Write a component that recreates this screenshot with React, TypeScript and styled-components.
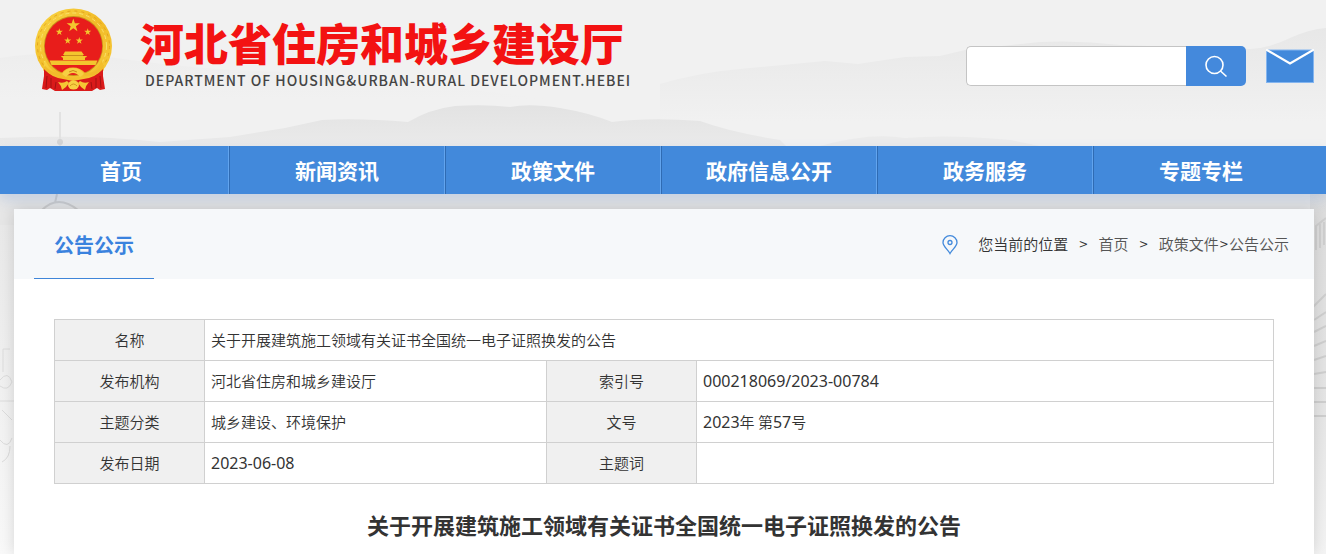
import React from "react";
import styled, { createGlobalStyle } from "styled-components";

const cjk = `"Noto Sans CJK SC", sans-serif`;

const GlobalStyle = createGlobalStyle`
  * { box-sizing: border-box; }
  body {
    margin: 0;
    background: #f1f1f1;
    color: #333;
    font-family: ${cjk};
    font-size: 15px;
    font-weight: 400;
  }
  a { color: inherit; text-decoration: none; }
`;

const Page = styled.div`
  position: relative;
  min-height: 100vh;
  overflow: hidden;
`;

const Scenery = styled.svg`
  position: absolute;
  top: 0;
  left: 0;
  width: 100%;
  height: 554px;
`;

const Content = styled.div`
  position: relative;
`;

const Header = styled.header`
  display: flex;
  justify-content: space-between;
  max-width: 1326px;
  height: 146px;
  margin: 0 auto;
  padding: 8px 12px 0 34px;
`;

const Brand = styled.a`
  display: flex;
  gap: 26px;
`;

const BrandText = styled.div`
  display: flex;
  flex-direction: column;
  padding-top: 4px;
`;

const SiteName = styled.span`
  font-size: 44px;
  line-height: 60px;
  font-weight: 900;
  color: #f31212;
  white-space: nowrap;
`;

const SiteNameEn = styled.span`
  padding-left: 5px;
  font-size: 14px;
  line-height: 16px;
  font-weight: 500;
  letter-spacing: 1px;
  color: #444;
  white-space: nowrap;
`;

const Tools = styled.div`
  display: flex;
  align-items: center;
  align-self: flex-start;
  gap: 20px;
  padding-top: 38px;
`;

const Search = styled.form`
  display: flex;
  height: 40px;
`;

const SearchInput = styled.input`
  width: 220px;
  padding: 0 12px;
  border: 1px solid #c4c4c4;
  border-right: 0;
  border-radius: 5px 0 0 5px;
  background: #fff;
  font: inherit;
  outline: none;
`;

const SearchButton = styled.button`
  display: flex;
  align-items: center;
  justify-content: center;
  width: 60px;
  padding: 0;
  border: 0;
  border-radius: 0 5px 5px 0;
  background: #4489dc;
`;

const MailLink = styled.a`
  display: flex;
`;

const Nav = styled.nav`
  padding: 0 13px;
  background: #4289db;
  box-shadow: 0 6px 12px rgba(80, 130, 210, 0.22);
`;

const NavList = styled.ul`
  display: flex;
  max-width: 1300px;
  margin: 0 auto;
  padding: 0;
  list-style: none;
`;

const NavItem = styled.li`
  flex: 0 1 216px;
  border-left: 1px solid #2f6bb3;
  border-right: 1px solid #62a4ee;
  text-align: center;

  &:first-child { border-left-color: transparent; }
  &:last-child { border-right-color: transparent; }
`;

const NavLink = styled.a`
  display: block;
  font-size: 21px;
  line-height: 48px;
  font-weight: 700;
  color: #fff;
`;

const Body = styled.div`
  padding: 15px 12px 0 14px;
`;

const Card = styled.main`
  max-width: 1300px;
  margin: 0 auto;
  padding-bottom: 12px;
  background: #fff;
  box-shadow: 0 0 14px rgba(0, 0, 0, 0.14);
`;

const CardHead = styled.div`
  display: flex;
  justify-content: space-between;
  height: 70px;
  padding: 0 25px 0 20px;
  background: #f6f8fa;
`;

const SectionTitle = styled.h2`
  margin: 0;
  padding: 2px 20px 0;
  border-bottom: 1px solid #3f85d8;
  font-size: 20px;
  line-height: 68px;
  font-weight: 700;
  color: #3a82de;
`;

const Crumbs = styled.nav`
  display: flex;
  align-items: center;
  font-weight: 350;
  line-height: 20px;
  color: #333;

  a { color: #555; }
  svg { margin: 2px 20px 0 0; }
`;

const Separator = styled.span<{ $tight?: boolean }>`
  padding: ${(p) => (p.$tight ? "0 1px" : "0 11px")};
`;

const Article = styled.article`
  padding: 40px 40px 0;
`;

const InfoTable = styled.table`
  width: 100%;
  border-collapse: collapse;
  table-layout: fixed;
`;

const Column = styled.col<{ $width?: number }>`
  width: ${(p) => (p.$width ? `${p.$width}px` : "auto")};
`;

const cell = `
  height: 41px;
  padding: 0 6px;
  border: 1px solid #d0d0d0;
  font-size: 15px;
  line-height: 20px;
  font-weight: 350;
`;

const Label = styled.th`
  ${cell}
  background: #f0f0f0;
  text-align: center;
`;

const Value = styled.td`
  ${cell}
  text-align: left;
`;

const Figures = styled.span`
  font-family: "Noto Sans", sans-serif;
  font-size: 16px;
  font-weight: 400;
`;

const Headline = styled.h1`
  margin: 22px 0 0;
  font-size: 22px;
  line-height: 36px;
  font-weight: 700;
  text-align: center;
`;

const STAR = "M0,-10 L2.3,-3.1 9.5,-3.1 3.7,1.2 5.9,8.1 0,3.9 -5.9,8.1 -3.7,1.2 -9.5,-3.1 -2.3,-3.1Z";

function Emblem() {
  return (
    <svg width="80" height="84" viewBox="0 0 80 84" aria-hidden="true">
      <defs>
        <linearGradient id="gold" x1="0" y1="0" x2="1" y2="1">
          <stop offset="0" stopColor="#f9d645" />
          <stop offset="0.5" stopColor="#f2bb28" />
          <stop offset="1" stopColor="#f7cb3a" />
        </linearGradient>
      </defs>
      <ellipse cx="39.500" cy="38" rx="38.500" ry="37.500" fill="url(#gold)" />
      <ellipse cx="39.500" cy="38" rx="36" ry="35" fill="none" stroke="#e3a41f" strokeWidth="1" strokeDasharray="3 4" />
      <ellipse cx="39.500" cy="38" rx="33" ry="33" fill="none" stroke="#fae06c" strokeWidth="1" strokeDasharray="4 3" />
      <ellipse cx="39.500" cy="38" rx="29.500" ry="30" fill="#c98f1b" />
      <ellipse cx="39.500" cy="38" rx="28.700" ry="29" fill="#e81d1b" />
      <path d="M11 52 Q18 68 39 70 Q61 68 68 52 L70 62 Q58 76 39 76 Q20 76 9 62Z" fill="url(#gold)" />
      <path d="M18 57 H61 Q54 64 46 65 L39 61 L33 65 Q25 64 18 57Z" fill="#e81d1b" />
      <g fill="#f3c52e">
        <path d={STAR} transform="translate(39.300 17.500) scale(.7)" />
        <path d={STAR} transform="translate(25.300 24) scale(.37)" />
        <path d={STAR} transform="translate(53.700 24) scale(.37)" />
        <path d={STAR} transform="translate(33.700 32.700) scale(.37)" />
        <path d={STAR} transform="translate(45.300 32.700) scale(.37)" />
        <path d="M31 43.500 H47.500 L50 47 H29Z M29 48 H51 V52 H29Z M27 48 H53 L52 49.500 H28Z" />
        <path d="M15.500 52.500 H63.500 L61.500 57 H17.500Z" />
      </g>
      <path d="M30 47.500 H49" stroke="#c98f1b" strokeWidth="1" />
      <path d="M10 59 Q12 66 24 70 L39 73 L55 70 Q67 66 69 59 L69 68 L71 81 L66 82 L63 80 L58 83 H21 L16 80 L13 82 L8 81 L10 68Z" fill="#da1a1a" />
      <path d="M13 68 L12 80 M17 70 L17 80 M66 68 L67 80 M62 70 L62 80 M22 74 L21 81 M57 74 L58 81" stroke="#a31212" strokeWidth="1" fill="none" />
      <path d="M10 59 Q18 68 29 66 Q32 61 39 61 Q46 61 50 66 Q61 68 69 59" fill="none" stroke="#f1bb2b" strokeWidth="3" />
      <path d="M28 66 Q32 60 39 60 Q46 60 50 66 L46 69 Q43 65 39 65 Q35 65 32 69Z" fill="#f7cf43" />
      <path d="M35 64 Q39 61 43 64" fill="none" stroke="#c98f1b" strokeWidth="1" />
      <path d="M24 74 Q29 76 33 73 L35 75 Q32 80 28 82 Q27 77 24 74Z M55 74 Q50 76 46 73 L44 75 Q47 80 51 82 Q52 77 55 74Z" fill="#f5c634" />
      <ellipse cx="39.500" cy="77" rx="5.500" ry="4.500" fill="#f7cf43" />
      <path d="M36 78 Q39.500 74 43 78" fill="none" stroke="#d2981e" strokeWidth="1" />
    </svg>
  );
}

function Mountains() {
  return (
    <Scenery viewBox="0 0 1326 554" preserveAspectRatio="xMidYMin slice" aria-hidden="true">
      <defs>
        <linearGradient id="ridge" x1="0" y1="0" x2="0" y2="1">
          <stop offset="0" stopColor="#dedede" />
          <stop offset="1" stopColor="#ebebeb" />
        </linearGradient>
        <linearGradient id="far" x1="0" y1="0" x2="0" y2="1">
          <stop offset="0" stopColor="#e5e5e5" />
          <stop offset="1" stopColor="#f1f1f1" />
        </linearGradient>
        <linearGradient id="side" x1="0" y1="0" x2="0" y2="1">
          <stop offset="0" stopColor="#dcdcdc" />
          <stop offset="0.6" stopColor="#e6e6e6" />
          <stop offset="1" stopColor="#f4f4f4" />
        </linearGradient>
        <linearGradient id="mist" x1="0" y1="0" x2="0" y2="1">
          <stop offset="0" stopColor="#e9e9e9" />
          <stop offset="1" stopColor="#f9f9f9" />
        </linearGradient>
      </defs>
      <path d="M0 58 Q60 48 130 60 Q220 72 300 72 L420 84 L560 100 H0Z" fill="url(#far)" opacity=".3" />
      <path d="M660 84 Q700 72 750 68 L825 61 L858 64 L905 57 L940 56 L965 50 Q1000 46 1040 42 Q1080 40 1120 45 L1250 49 Q1270 48 1290 38 Q1310 29 1326 28 V122 H660Z" fill="url(#far)" opacity=".8" />
      <path d="M0 138 Q90 134 160 142 L230 137 L285 128 L322 120 Q360 118 408 122 Q430 109 455 106 Q485 104 510 107 Q530 103 560 108 Q590 113 612 122 Q650 117 700 121 Q730 132 780 140 L800 160 H0Z" fill="url(#ridge)" opacity=".75" />
      <path d="M820 146 Q870 132 905 138 Q950 134 1010 140 L1060 150 H820Z" fill="#ebebeb" />
      <path d="M60 112 V146" stroke="#e2e2e2" strokeWidth="2" />
      <circle cx="60" cy="142" r="3" fill="#d4d4d4" />
      <path d="M0 194 H1326 V225 H0Z" fill="#e6e6e6" />
      <path d="M57 194 L55 203 M42 210 Q58 194 78 210" fill="none" stroke="#cdcdcd" strokeWidth="2" />
      <path d="M0 225 H20 V554 H0Z" fill="url(#mist)" />
      <path d="M3 372 V349 H10 M0 380 Q8 370 12 382 Q8 392 0 386 M0 401 H14 M2 410 L12 420 M0 440 Q8 450 12 438 M2 462 Q10 458 10 446" fill="none" stroke="#dcdcdc" strokeWidth="1" />
      <path d="M1310 194 H1326 V554 H1310Z" fill="url(#side)" />
      <path d="M1316 250 V226 L1326 218 M1320 248 V224 M1324 245 V222 M1310 310 L1326 294 M1314 320 L1326 312 M1314 332 L1326 326 M1314 346 L1326 341 M1314 360 L1326 356 M1314 374 L1326 372 M1314 388 H1326 M1314 402 H1326 M1314 416 H1326" fill="none" stroke="#cfcfcf" strokeWidth="2" />
    </Scenery>
  );
}

const navItems = ["首页", "新闻资讯", "政策文件", "政府信息公开", "政务服务", "专题专栏"];
const subject = "关于开展建筑施工领域有关证书全国统一电子证照换发的公告";

export default function App() {
  return (
    <Page>
      <GlobalStyle />
      <Mountains />
      <Content>
        <Header>
          <Brand href="#">
            <Emblem />
            <BrandText>
              <SiteName>河北省住房和城乡建设厅</SiteName>
              <SiteNameEn>DEPARTMENT OF HOUSING&amp;URBAN-RURAL DEVELOPMENT.HEBEI</SiteNameEn>
            </BrandText>
          </Brand>
          <Tools>
            <Search role="search">
              <SearchInput type="text" aria-label="搜索" />
              <SearchButton type="button" aria-label="搜索">
                <svg width="24" height="24" viewBox="0 0 24 24" fill="none" stroke="#fff" strokeWidth="1.6">
                  <circle cx="10.500" cy="11" r="8.500" />
                  <path d="M16.500 17 L22.500 22.500" />
                </svg>
              </SearchButton>
            </Search>
            <MailLink href="#" aria-label="邮箱">
              <svg width="48" height="34" viewBox="0 0 48 34">
                <rect x="0.500" y="1" width="47" height="32.500" fill="#4289db" stroke="#84b5ef" />
                <path d="M0 0.500 L24 14.500 L48 0.500" fill="none" stroke="#fff" strokeWidth="2.200" />
              </svg>
            </MailLink>
          </Tools>
        </Header>
        <Nav>
          <NavList>
            {navItems.map((item) => (
              <NavItem key={item}>
                <NavLink href="#">{item}</NavLink>
              </NavItem>
            ))}
          </NavList>
        </Nav>
        <Body>
          <Card>
            <CardHead>
              <SectionTitle>公告公示</SectionTitle>
              <Crumbs>
                <svg width="16" height="20" viewBox="0 0 16 20" fill="none" stroke="#4289db" strokeWidth="1.300">
                  <path d="M8 18.500 C6 14.500 1 11.500 1 7.500 A7 6.800 0 0 1 15 7.500 C15 11.500 10 14.500 8 18.500Z" />
                  <circle cx="8" cy="7.500" r="2" />
                </svg>
                <span>您当前的位置</span>
                <Separator>&gt;</Separator>
                <a href="#">首页</a>
                <Separator>&gt;</Separator>
                <a href="#">政策文件</a>
                <Separator $tight>&gt;</Separator>
                <a href="#">公告公示</a>
              </Crumbs>
            </CardHead>
            <Article>
              <InfoTable>
                <colgroup>
                  <Column $width={150} />
                  <Column $width={342} />
                  <Column $width={150} />
                  <Column />
                </colgroup>
                <tbody>
                  <tr>
                    <Label scope="row">名称</Label>
                    <Value colSpan={3}>{subject}</Value>
                  </tr>
                  <tr>
                    <Label scope="row">发布机构</Label>
                    <Value>河北省住房和城乡建设厅</Value>
                    <Label scope="row">索引号</Label>
                    <Value><Figures>000218069/2023-00784</Figures></Value>
                  </tr>
                  <tr>
                    <Label scope="row">主题分类</Label>
                    <Value>城乡建设、环境保护</Value>
                    <Label scope="row">文号</Label>
                    <Value>
                      <Figures>2023</Figures>年 第<Figures>57</Figures>号
                    </Value>
                  </tr>
                  <tr>
                    <Label scope="row">发布日期</Label>
                    <Value><Figures>2023-06-08</Figures></Value>
                    <Label scope="row">主题词</Label>
                    <Value />
                  </tr>
                </tbody>
              </InfoTable>
              <Headline>{subject}</Headline>
            </Article>
          </Card>
        </Body>
      </Content>
    </Page>
  );
}
